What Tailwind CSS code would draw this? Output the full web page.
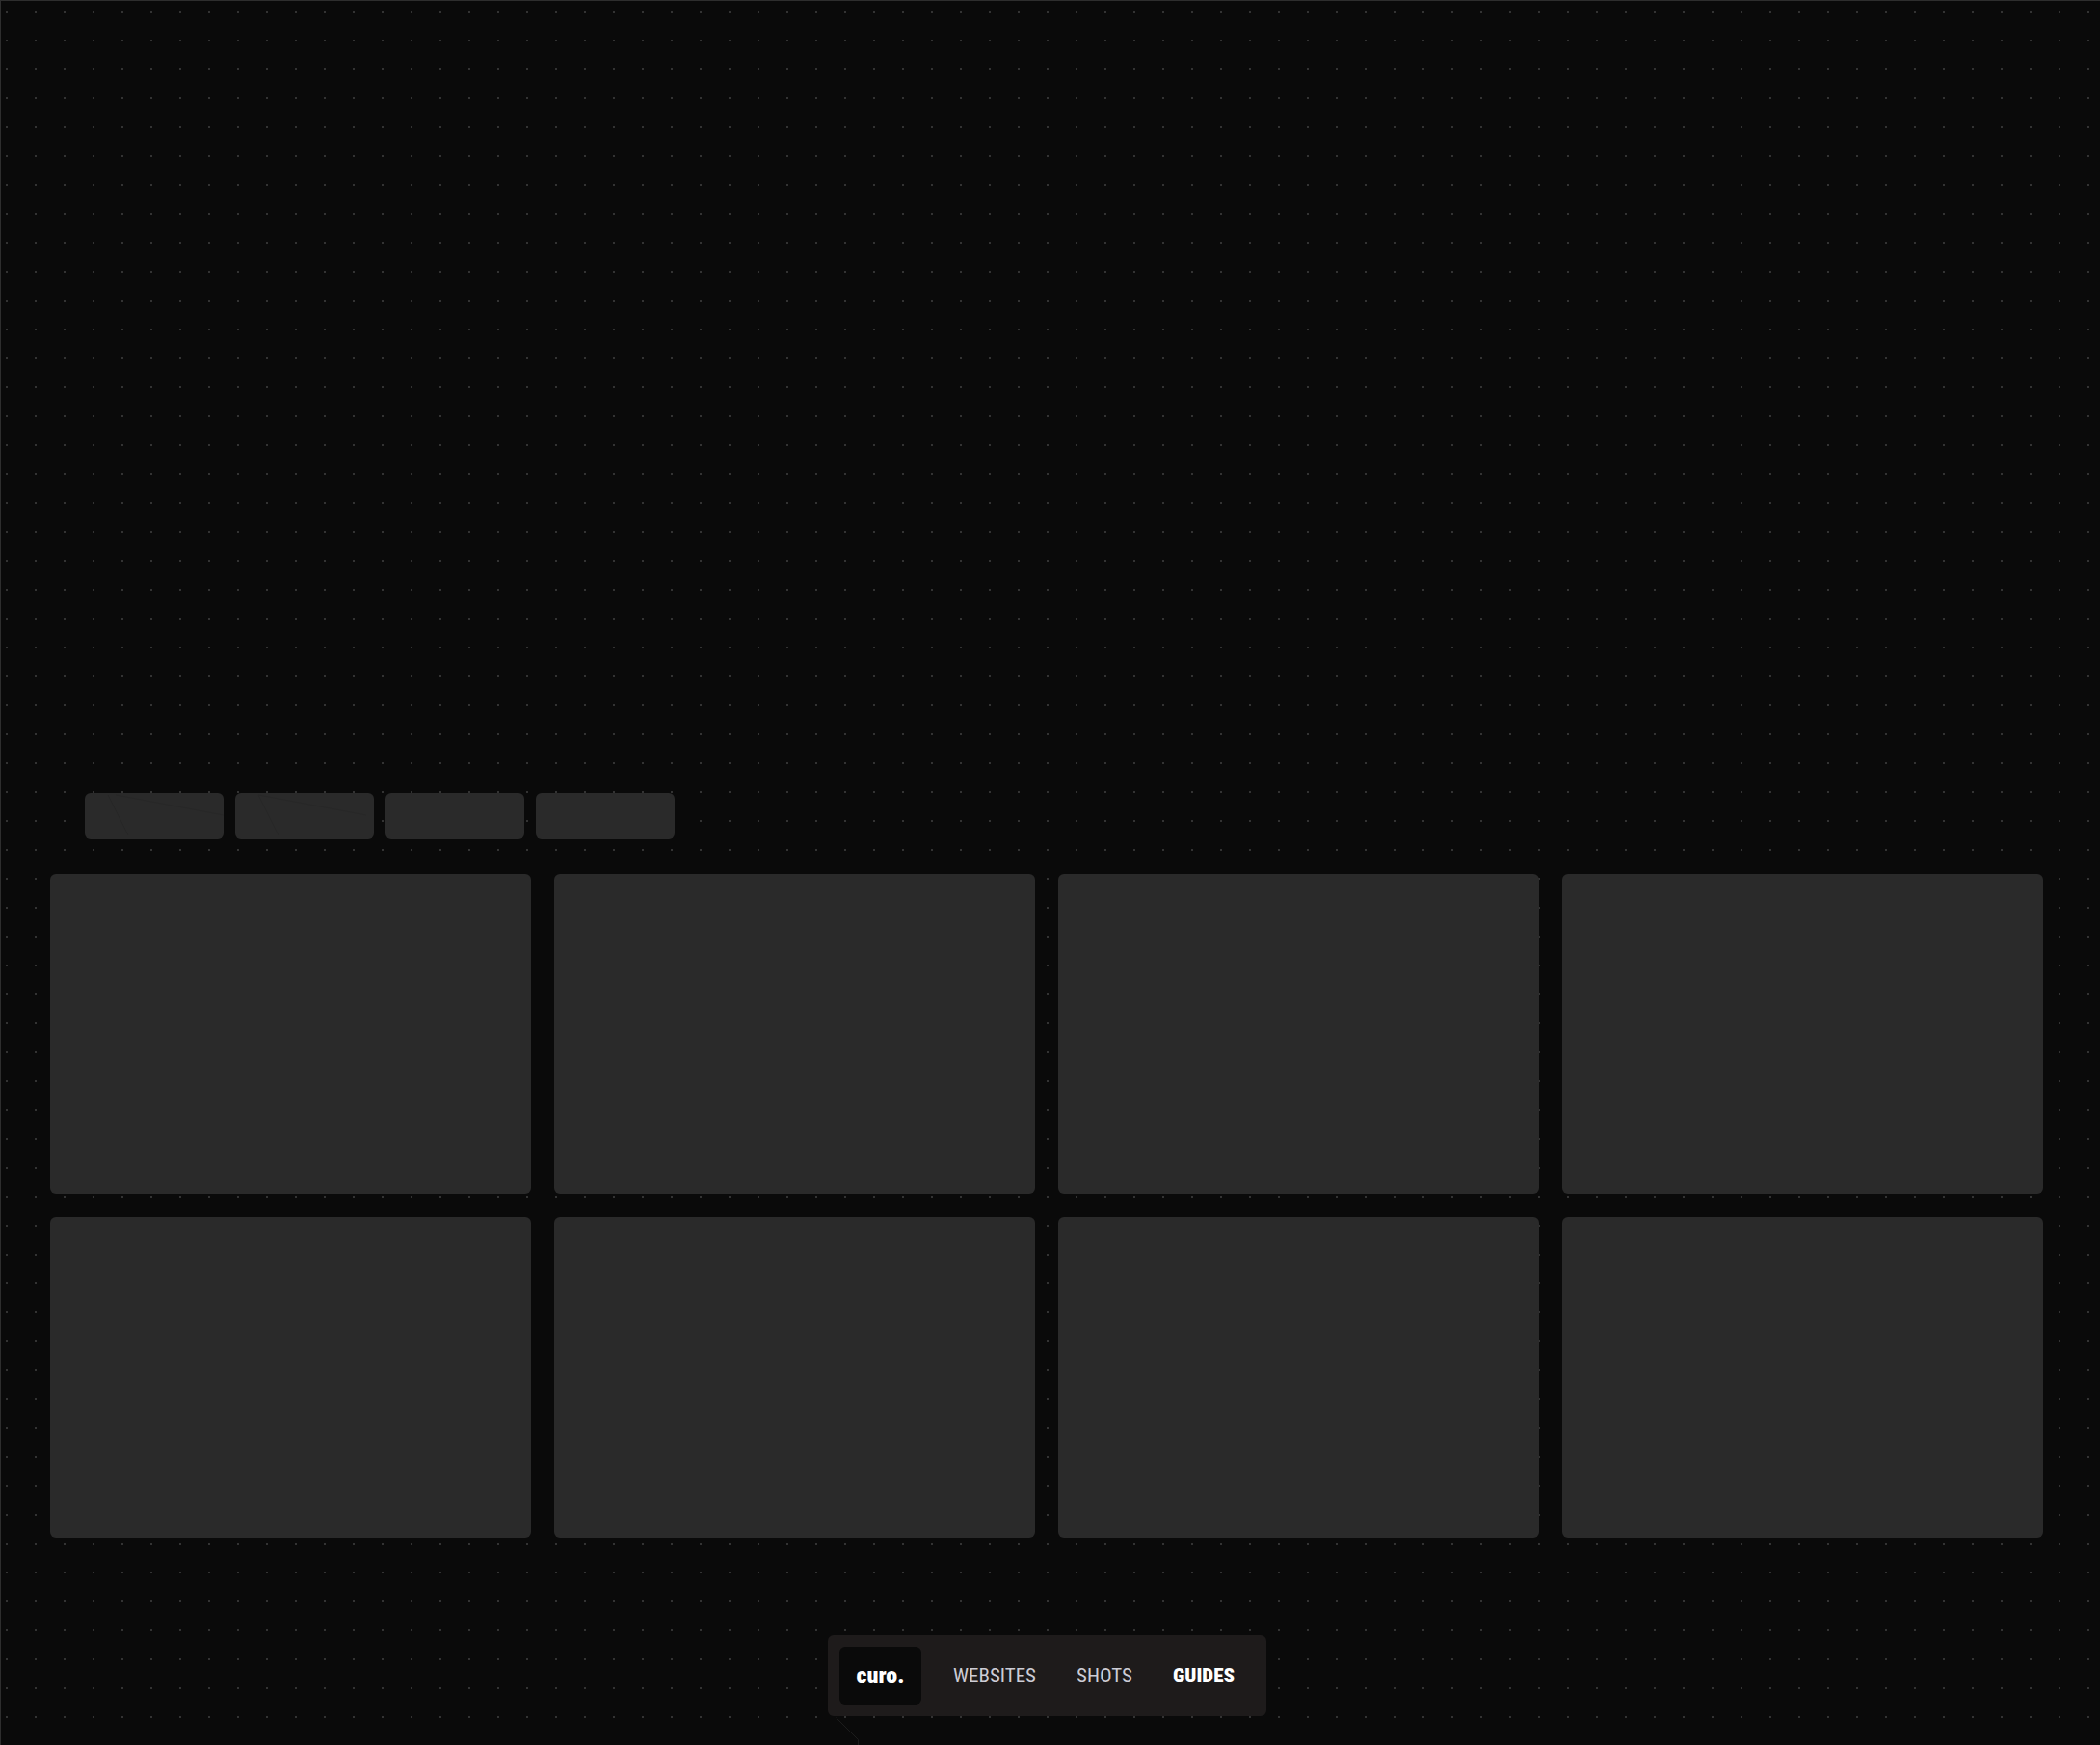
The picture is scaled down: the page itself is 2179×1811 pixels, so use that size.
<!DOCTYPE html>
<html lang="en">
<head>
<meta charset="utf-8">
<title>curo.</title>
<script src="https://cdn.jsdelivr.net/npm/@tailwindcss/browser@4"></script>
</head>
<body class="m-0 bg-[#0a0a0a] font-['Roboto',sans-serif]">
<div class="relative h-[1811px] w-[2179px] overflow-hidden border-t border-l border-t-[#2e2e2e] border-l-[#2e2e2e] bg-[#0a0a0a] bg-[radial-gradient(#333333_1px,transparent_1px)] bg-[size:30px_30px] bg-[position:-9px_-4px]">
  <div class="flex h-[870px] items-end gap-3 pl-[87px]">
    <div class="h-12 w-36 rounded-md bg-[#2a2a2a]"></div>
    <div class="h-12 w-36 rounded-md bg-[#2a2a2a]"></div>
    <div class="h-12 w-36 rounded-md bg-[#2a2a2a]"></div>
    <div class="h-12 w-36 rounded-md bg-[#2a2a2a]"></div>
  </div>
  <div class="mt-[35.6px] ml-[51px] grid w-[2068px] grid-cols-4 gap-6">
    <div class="aspect-[3/2] rounded-md bg-[#2a2a2a]"></div>
    <div class="aspect-[3/2] rounded-md bg-[#2a2a2a]"></div>
    <div class="aspect-[3/2] rounded-md bg-[#2a2a2a]"></div>
    <div class="aspect-[3/2] rounded-md bg-[#2a2a2a]"></div>
    <div class="aspect-[3/2] rounded-md bg-[#2a2a2a]"></div>
    <div class="aspect-[3/2] rounded-md bg-[#2a2a2a]"></div>
    <div class="aspect-[3/2] rounded-md bg-[#2a2a2a]"></div>
    <div class="aspect-[3/2] rounded-md bg-[#2a2a2a]"></div>
  </div>
  <nav class="absolute top-[1696px] left-[858px] flex h-[84px] w-[455px] items-center rounded-md bg-[#1e1b1b] p-3 text-[21px] leading-none [font-stretch:75%]">
    <a class="mr-3 flex h-[60px] w-[85px] items-center justify-center rounded-md bg-[#0a0a0a] text-[24px] font-black text-white">curo.</a>
    <a class="px-[21px] text-[#cdcdd6]">WEBSITES</a>
    <a class="px-[21px] text-[#cdcdd6]">SHOTS</a>
    <a class="px-[21px] font-black text-white">GUIDES</a>
  </nav>
  <svg class="pointer-events-none absolute top-[-1px] left-[-1px]" width="2179" height="1811" fill="none" stroke-width="1">
    <path d="M867.5 1782.5 L890.5 1805.5 V1811" stroke="#1c1c1c"/>
    <path d="M112 825 L133 867" stroke="#262626"/>
    <path d="M120 825 L232 846" stroke="#272727"/>
    <path d="M268 825 L380 846" stroke="#272727"/>
    <path d="M268 825 L289 867" stroke="#272727"/>
  </svg>
</div>
</body>
</html>
